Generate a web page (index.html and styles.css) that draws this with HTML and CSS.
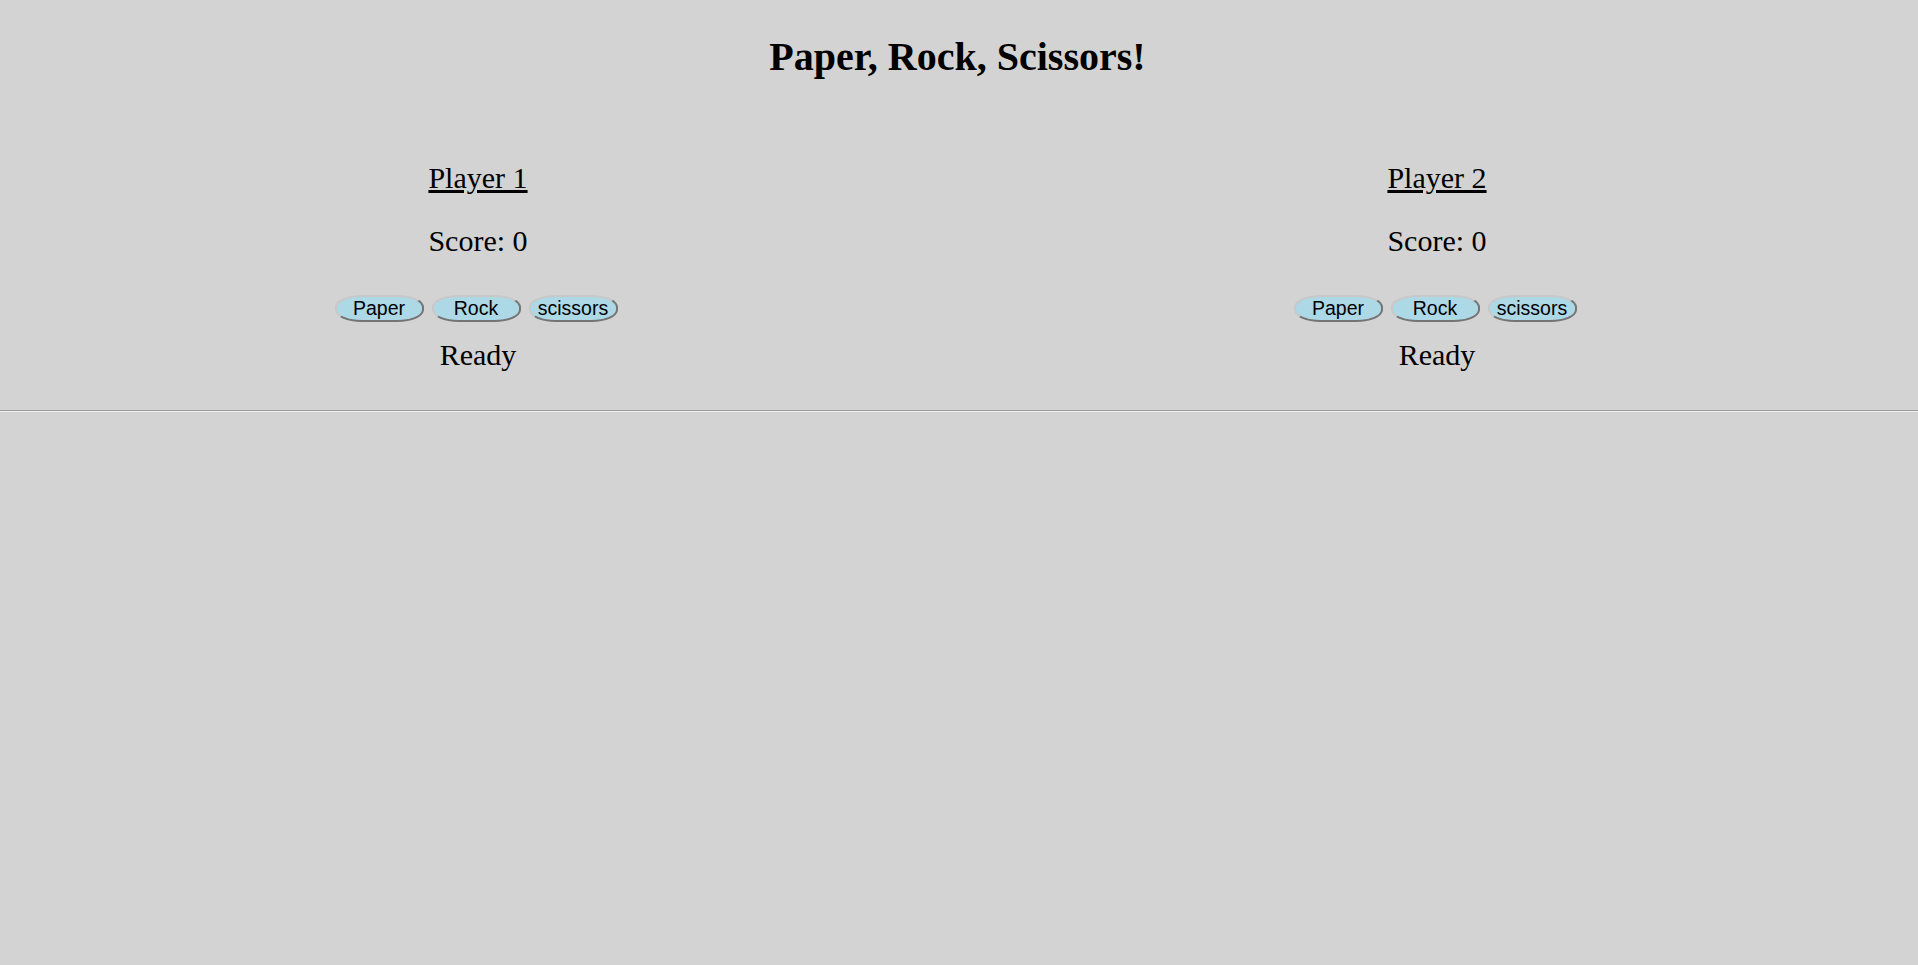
FILE: index.html
```html
<!DOCTYPE html>
<html>
<head>
<meta charset="utf-8">
<title>Paper, Rock, Scissors!</title>
<link rel="stylesheet" href="styles.css">
</head>
<body>
<header class="header">
  <h1 class="title">Paper, Rock, Scissors!</h1>
</header>
<main class="players">
  <section class="player">
    <h2 class="player-name">Player 1</h2>
    <p class="score">Score: 0</p>
    <div class="choices">
      <button class="choice">Paper</button>
      <button class="choice">Rock</button>
      <button class="choice">scissors</button>
    </div>
    <p class="status">Ready</p>
  </section>
  <section class="player">
    <h2 class="player-name">Player 2</h2>
    <p class="score">Score: 0</p>
    <div class="choices">
      <button class="choice">Paper</button>
      <button class="choice">Rock</button>
      <button class="choice">scissors</button>
    </div>
    <p class="status">Ready</p>
  </section>
</main>
<hr class="divider">
</body>
</html>
```
FILE: styles.css
```css
html, body {
  margin: 0;
  padding: 0;
  background: #d3d3d3;
  color: #000;
  font-family: "Liberation Serif", "Times New Roman", serif;
}

.header {
  padding-top: 35px;
  padding-right: 3px;
  text-align: center;
}

.title {
  margin: 0;
  font-size: 40px;
  line-height: 44px;
  font-weight: bold;
}

.players {
  display: flex;
  margin-top: 82px;
}

.player {
  flex: 1 1 0;
  display: flex;
  flex-direction: column;
  align-items: center;
  padding-right: 3px;
  font-size: 30px;
}

.player-name {
  margin: 0;
  font-size: 30px;
  font-weight: normal;
  line-height: 33px;
  text-decoration: underline;
}

.score {
  margin: 30px 0 0;
  line-height: 33px;
}

.choices {
  display: flex;
  gap: 8px;
  margin-top: 38px;
  padding-right: 4px;
}

.choice {
  box-sizing: border-box;
  width: 89px;
  height: 27px;
  padding: 0;
  background: #add8e6;
  border: 2px outset #c8c8c8;
  border-radius: 30% / 45%;
  font-family: "Liberation Sans", Arial, sans-serif;
  font-size: 19.5px;
  line-height: 21px;
  color: #000;
}

.status {
  margin: 16px 0 0;
  line-height: 33px;
}

.divider {
  margin: 39px 0 0;
  border: 0;
  border-top: 1px solid #9a9a9a;
  border-bottom: 1px solid #eeeeee;
  height: 0;
}
```
